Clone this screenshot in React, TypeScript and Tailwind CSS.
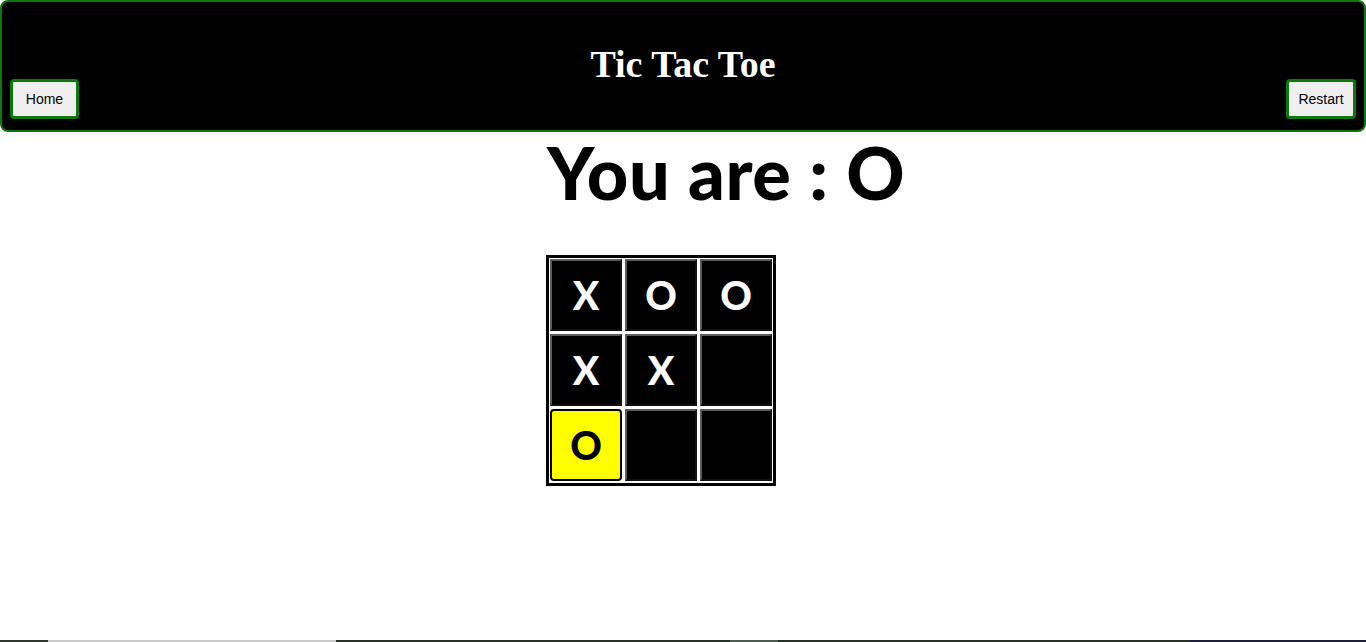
import React from "react";

const board: string[] = ["X", "O", "O", "X", "X", "", "O", "", ""];
const winning = 6;

const Cell = ({ value, highlight }: { value: string; highlight: boolean }) => {
  if (highlight) {
    return (
      <button
        type="button"
        className="w-[72px] h-[72px] flex items-center justify-center bg-[#ffff00] border-2 border-black rounded-[4px] text-black text-[39px] font-black leading-none font-['Lato',sans-serif]"
      >
        {value}
      </button>
    );
  }
  return (
    <button
      type="button"
      className="w-[72px] h-[72px] flex items-center justify-center bg-black border-2 border-t-[#5c5c5c] border-l-[#5c5c5c] border-r-[#111] border-b-[#111] text-white text-[39px] font-black leading-none font-['Lato',sans-serif]"
    >
      {value}
    </button>
  );
};

const App = () => {
  return (
    <div className="min-h-[642px] flex flex-col bg-white">
      <header className="h-[132px] bg-black border-2 border-[#0b7a0b] rounded-lg flex flex-col pt-[47px]">
        <h1 className="text-center text-white text-[38px] leading-[30px] font-bold font-['Liberation_Serif',serif]">
          Tic Tac Toe
        </h1>
        <div className="flex justify-between px-[8px] pb-[12px]">
          <button
            type="button"
            className="w-[69px] h-[40px] pt-[1px] bg-[#efefef] border-[3px] border-[#0b7a0b] rounded-[4px] text-[14px] text-black font-['Liberation_Sans',sans-serif]"
          >
            Home
          </button>
          <button
            type="button"
            className="w-[70px] h-[40px] pt-[1px] bg-[#efefef] border-[3px] border-[#0b7a0b] rounded-[4px] text-[14px] text-black font-['Liberation_Sans',sans-serif]"
          >
            Restart
          </button>
        </div>
      </header>

      <main className="flex-1">
        <div className="mx-auto w-[274px] flex flex-col items-start">
          <h2 className="mt-[4px] ml-[1px] whitespace-nowrap text-[72px] leading-none font-black tracking-[0.6px] text-black font-['Lato',sans-serif]">
            You are : O
          </h2>
          <div className="mt-[47px] border-[3px] border-black bg-white pt-[1px] px-[1px] pb-[2px] grid grid-cols-3 gap-[3px]">
            {board.map((v, i) => (
              <Cell key={i} value={v} highlight={i === winning} />
            ))}
          </div>
        </div>
      </main>

      <div className="h-[2px] flex">
        <div className="w-[48px] bg-[#2b382b]" />
        <div className="w-[288px] bg-[#c9c9c9]" />
        <div className="w-[394px] bg-[#263226]" />
        <div className="w-[48px] bg-[#4d5c4d]" />
        <div className="w-[412px] bg-[#263226]" />
        <div className="flex-1 bg-[#1f1f3a]" />
      </div>
    </div>
  );
};

export default App;
